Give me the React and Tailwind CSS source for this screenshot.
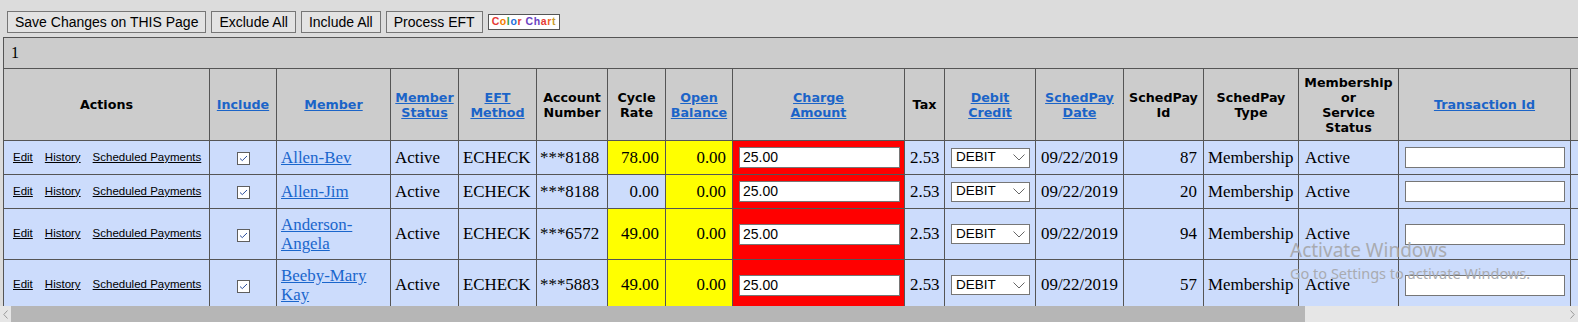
import React from 'react';

const sans = "font-['Liberation_Sans',Arial,sans-serif]";
const serif = "font-['Liberation_Serif','Times_New_Roman',serif]";
const head = "font-['DejaVu_Sans',Verdana,sans-serif]";

const headers = [
  { lines: ['Actions'] },
  { lines: ['Include'], link: true },
  { lines: ['Member'], link: true },
  { lines: ['Member', 'Status'], link: true },
  { lines: ['EFT', 'Method'], link: true },
  { lines: ['Account', 'Number'] },
  { lines: ['Cycle', 'Rate'] },
  { lines: ['Open', 'Balance'], link: true },
  { lines: ['Charge', 'Amount'], link: true },
  { lines: ['Tax'] },
  { lines: ['Debit', 'Credit'], link: true },
  { lines: ['SchedPay', 'Date'], link: true },
  { lines: ['SchedPay', 'Id'] },
  { lines: ['SchedPay', 'Type'] },
  { lines: ['Membership', 'or', 'Service', 'Status'] },
  { lines: ['Transaction Id'], link: true },
  { lines: [] },
];

const rows = [
  { name: ['Allen-Bev'], acct: '***8188', cycle: '78.00', yellow: true, id: 87, tall: false },
  { name: ['Allen-Jim'], acct: '***8188', cycle: '0.00', yellow: false, id: 20, tall: false },
  { name: ['Anderson-', 'Angela'], acct: '***6572', cycle: '49.00', yellow: true, id: 94, tall: true },
  { name: ['Beeby-Mary', 'Kay'], acct: '***5883', cycle: '49.00', yellow: true, id: 57, tall: true },
];

const chart = [
  ['C', 'text-[#e53935]'],
  ['o', 'text-[#f57c00]'],
  ['l', 'text-[#2e9e3e]'],
  ['o', 'text-[#1e6fd9]'],
  ['r', 'text-[#e53935]'],
  [' ', ''],
  ['C', 'text-[#6a3fc1]'],
  ['h', 'text-[#6a3fc1]'],
  ['a', 'text-[#e53935]'],
  ['r', 'text-[#f06020]'],
  ['t', 'text-[#c89b2c]'],
];

function ToolButton({ children }) {
  return (
    <button className={`h-[22px] px-[7px] border border-[#767676] bg-[#e3e3e3] text-[14px] text-black ${sans}`}>
      {children}
    </button>
  );
}

function CheckBox() {
  return (
    <span className="inline-flex w-[13px] h-[13px] border border-[#5f5f5f] bg-white items-center justify-center align-middle">
      <svg width="9" height="7" viewBox="0 0 9 7">
        <path d="M1 3.5 L3.3 5.6 L8 1" fill="none" stroke="#2d4f9e" strokeWidth="1" />
      </svg>
    </span>
  );
}

function DebitSelect() {
  return (
    <div className={`w-[79px] h-[20px] border border-[#767676] bg-white flex items-center justify-between pl-[4px] pr-[4px] text-[13.5px] text-black ${sans}`}>
      <span>DEBIT</span>
      <svg width="12" height="7" viewBox="0 0 12 7">
        <path d="M0.5 0.5 L6 6 L11.5 0.5" fill="none" stroke="#666" strokeWidth="1" />
      </svg>
    </div>
  );
}

const cell = 'border border-[#555] align-middle';

function Lines({ lines }) {
  return lines.map((l, j) => (
    <React.Fragment key={j}>
      {j > 0 && <br />}
      {l}
    </React.Fragment>
  ));
}

export default function App() {
  return (
    <div className="w-[1578px] h-[322px] bg-[#dcdcdc] overflow-hidden">
      <div className="h-[37px] flex items-start gap-[5px] pl-[7px] pt-[11px]">
        <ToolButton>Save Changes on THIS Page</ToolButton>
        <ToolButton>Exclude All</ToolButton>
        <ToolButton>Include All</ToolButton>
        <ToolButton>Process EFT</ToolButton>
        <div className={`mt-[3px] h-[16px] px-[3px] flex items-center border border-[#555] bg-white text-[10.5px] font-bold tracking-[0.6px] ${sans}`}>
          {chart.map(([ch, c], i) => (
            <span key={i} className={c}>{ch === ' ' ? '\u00a0' : ch}</span>
          ))}
        </div>
      </div>

      <div className="relative h-[269px] overflow-hidden pl-[3px]">
        <table className="table-fixed border-collapse w-[1687px]">
          <colgroup>
            <col className="w-[206px]" />
            <col className="w-[67px]" />
            <col className="w-[114px]" />
            <col className="w-[68px]" />
            <col className="w-[78px]" />
            <col className="w-[71px]" />
            <col className="w-[58px]" />
            <col className="w-[67px]" />
            <col className="w-[172px]" />
            <col className="w-[40px]" />
            <col className="w-[91px]" />
            <col className="w-[88px]" />
            <col className="w-[80px]" />
            <col className="w-[95px]" />
            <col className="w-[100px]" />
            <col className="w-[172px]" />
            <col className="w-[120px]" />
          </colgroup>
          <tbody>
            <tr className="h-[31px] bg-[#cccccc]">
              <td colSpan={17} className={`${cell} px-[7px] text-[16px] text-black ${serif}`}>1</td>
            </tr>
            <tr className="h-[72px] bg-[#cccccc]">
              {headers.map((h, i) => (
                <th key={i} className={`${cell} px-[2px] text-center font-bold text-[12.7px] leading-[15px] ${head}`}>
                  {h.link ? (
                    <a href="#" className="text-[#1b64c8] underline">
                      <Lines lines={h.lines} />
                    </a>
                  ) : (
                    <span className="text-black">
                      <Lines lines={h.lines} />
                    </span>
                  )}
                </th>
              ))}
            </tr>
            {rows.map((r, i) => (
              <tr key={i} className={`${r.tall ? 'h-[51px]' : 'h-[34px]'} bg-[#ccdcfc] text-[16.9px] text-black ${serif}`}>
                <td className={`${cell} pl-[9px]`}>
                  <div className={`flex gap-[12px] text-[11.5px] ${sans}`}>
                    <a href="#" className="text-black underline">Edit</a>
                    <a href="#" className="text-black underline">History</a>
                    <a href="#" className="text-black underline">Scheduled Payments</a>
                  </div>
                </td>
                <td className={`${cell} text-center`}>
                  <CheckBox />
                </td>
                <td className={`${cell} px-[4px] leading-[19px]`}>
                  <a href="#" className="text-[#1a66cc] underline">
                    <Lines lines={r.name} />
                  </a>
                </td>
                <td className={`${cell} px-[4px]`}>Active</td>
                <td className={`${cell} px-[4px]`}>ECHECK</td>
                <td className={`${cell} px-[3px]`}>{r.acct}</td>
                <td className={`${cell} px-[6px] text-right ${r.yellow ? 'bg-[#ffff00]' : ''}`}>{r.cycle}</td>
                <td className={`${cell} px-[6px] text-right bg-[#ffff00]`}>0.00</td>
                <td className={`${cell} pl-[6px] bg-[#ff0000]`}>
                  <input
                    readOnly
                    defaultValue="25.00"
                    className={`block w-[161px] h-[21px] border border-[#767676] bg-white px-[3px] text-[14px] text-black ${sans}`}
                  />
                </td>
                <td className={`${cell} px-[5px] text-right`}>2.53</td>
                <td className={`${cell} pl-[6px]`}>
                  <DebitSelect />
                </td>
                <td className={`${cell} px-[5px]`}>09/22/2019</td>
                <td className={`${cell} px-[6px] text-right`}>{r.id}</td>
                <td className={`${cell} px-[4px]`}>Membership</td>
                <td className={`${cell} px-[6px]`}>Active</td>
                <td className={`${cell} pl-[6px]`}>
                  <input
                    readOnly
                    defaultValue=""
                    className="block w-[160px] h-[21px] border border-[#767676] bg-white"
                  />
                </td>
                <td className={cell}></td>
              </tr>
            ))}
          </tbody>
        </table>

        <div className="absolute left-[1290px] top-[202px] pointer-events-none text-[#a9abb0]">
          <div className="text-[19px] leading-[22px] font-['Noto_Sans',sans-serif]">Activate Windows</div>
          <div className="mt-[4px] text-[14.5px] leading-[17px] font-['Noto_Sans',sans-serif]">Go to Settings to activate Windows.</div>
        </div>
      </div>

      <div className="h-[16px] flex items-stretch bg-[#e6e6e6]">
        <div className="w-[11px] flex items-center justify-center">
          <svg width="5" height="9" viewBox="0 0 5 9">
            <path d="M4.5 0.5 L0.8 4.5 L4.5 8.5" fill="none" stroke="#9a9a9a" strokeWidth="1" />
          </svg>
        </div>
        <div className="w-[1294px] bg-[#b6b6b6]"></div>
        <div className="flex-1 flex items-center justify-end pr-[3px]">
          <svg width="5" height="9" viewBox="0 0 5 9">
            <path d="M0.5 0.5 L4.2 4.5 L0.5 8.5" fill="none" stroke="#9a9a9a" strokeWidth="1" />
          </svg>
        </div>
      </div>
    </div>
  );
}
